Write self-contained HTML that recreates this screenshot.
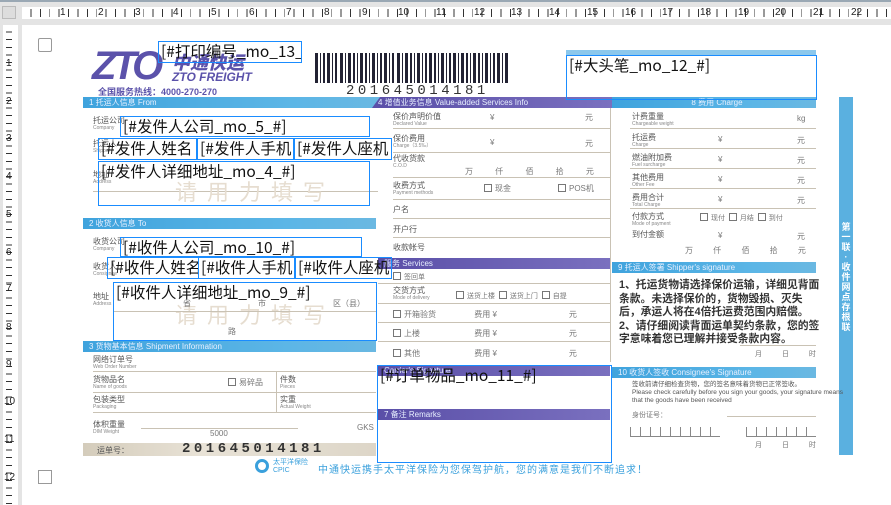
<!DOCTYPE html>
<html><head><meta charset="utf-8">
<style>
*{margin:0;padding:0;box-sizing:border-box}
body{width:891px;height:505px;overflow:hidden;background:#fff;position:relative;font-family:"Liberation Sans","Noto Sans CJK SC",sans-serif}
.a{position:absolute}
.bx{position:absolute;border:1.5px solid #1a8cff;font-family:"Noto Sans CJK SC",sans-serif;font-size:15.5px;line-height:18px;color:#111;white-space:nowrap;overflow:hidden;padding-left:2px}
.hd{position:absolute;height:11px;color:#e8f0ff;font-size:8px;line-height:11px;padding-left:6px;white-space:nowrap}
.hb{background:linear-gradient(90deg,#3fa3dd,#5cb6e6 70%,#6ab8e2)}
.hp{background:linear-gradient(90deg,#5a4fa8,#7a70bf)}
.lb{position:absolute;font-size:8px;color:#555;line-height:8px;white-space:nowrap}
.lb i{display:block;font-style:normal;font-size:5px;color:#888;line-height:6px}
.ln{position:absolute;height:1px;background:#c9c2b4}
.vl{position:absolute;width:1px;background:#c9c2b4}
.cb{display:inline-block;width:8px;height:8px;border:1px solid #777;vertical-align:-1px;margin-right:3px}
.g{color:#777;font-size:8px}
</style></head><body>
<!-- rulers -->
<div class="a" style="left:0;top:0;width:891px;height:2px;background:#9aa8b4"></div>
<div class="a" style="left:0;top:2px;width:891px;height:23px;background:#e4e4e4"></div>
<div class="a" style="left:22px;top:7px;width:869px;height:12px;background:#fff"></div>
<div class="a" style="left:2px;top:6px;width:14px;height:13px;background:#ddd;border:1px solid #bbb"></div>
<div class="a" style="left:0;top:25px;width:22px;height:480px;background:#e4e4e4"></div>
<div class="a" style="left:3px;top:25px;width:15px;height:480px;background:#fff"></div>
<div class="a" style="left:22px;top:9px;width:869px;height:8px;background:repeating-linear-gradient(90deg,transparent 0 8.5px,#333 8.5px 9.4px)"></div>
<div class="a" style="left:6px;top:25px;width:6px;height:480px;background:repeating-linear-gradient(180deg,transparent 0 6.6px,#333 6.6px 7.6px)"></div>
<div class="a" style="left:22px;top:7px;width:869px;font-size:10px;line-height:12px;color:#222;background:transparent">
<span class="a" style="left:38px">1</span><span class="a" style="left:76px">2</span><span class="a" style="left:113px">3</span><span class="a" style="left:151px">4</span><span class="a" style="left:189px">5</span><span class="a" style="left:227px">6</span><span class="a" style="left:264px">7</span><span class="a" style="left:302px">8</span><span class="a" style="left:340px">9</span><span class="a" style="left:376px">10</span><span class="a" style="left:414px">11</span><span class="a" style="left:452px">12</span><span class="a" style="left:489px">13</span><span class="a" style="left:527px">14</span><span class="a" style="left:565px">15</span><span class="a" style="left:603px">16</span><span class="a" style="left:640px">17</span><span class="a" style="left:678px">18</span><span class="a" style="left:716px">19</span><span class="a" style="left:753px">20</span><span class="a" style="left:791px">21</span><span class="a" style="left:829px">22</span></div>
<div class="a" style="left:6px;top:25px;font-size:10px;color:#222;width:12px;background:#fff">
<span class="a" style="top:33px">1</span><span class="a" style="top:71px">2</span><span class="a" style="top:108px">3</span><span class="a" style="top:146px">4</span><span class="a" style="top:184px">5</span><span class="a" style="top:222px">6</span><span class="a" style="top:258px">7</span><span class="a" style="top:297px">8</span><span class="a" style="top:334px">9</span><span class="a" style="top:371px;left:-2px">10</span><span class="a" style="top:409px;left:-2px">11</span><span class="a" style="top:447px;left:-2px">12</span></div>

<!-- corners -->
<div class="a" style="left:38px;top:38px;width:14px;height:14px;border:1.5px solid #999;border-radius:2px"></div>
<div class="a" style="left:38px;top:470px;width:14px;height:14px;border:1.5px solid #999"></div>

<!-- logo -->
<div class="a" style="left:92px;top:46px;font:italic 900 40px 'Liberation Sans',sans-serif;color:#5b52aa;letter-spacing:-4px;line-height:40px">ZTO</div>
<div class="a" style="left:172px;top:52px;font:italic 900 18px 'Noto Sans CJK SC',sans-serif;color:#5b52aa;line-height:20px">中通快运</div>
<div class="a" style="left:172px;top:70px;font:italic bold 12px 'Liberation Sans',sans-serif;color:#5b52aa">ZTO FREIGHT</div>
<div class="a" style="left:98px;top:85px;font:bold 9px 'Liberation Sans','Noto Sans CJK SC',sans-serif;color:#5b52aa">全国服务热线：4000-270-270</div>

<!-- barcode -->
<svg class="a" style="left:315px;top:53px" width="196" height="30">
<g fill="#223">
<rect x="0" width="3" height="30"/><rect x="5" width="1" height="30"/><rect x="8" width="2" height="30"/><rect x="12" width="3" height="30"/><rect x="17" width="1" height="30"/><rect x="20" width="2" height="30"/><rect x="25" width="3" height="30"/><rect x="30" width="1" height="30"/><rect x="33" width="3" height="30"/><rect x="38" width="2" height="30"/><rect x="42" width="1" height="30"/><rect x="45" width="3" height="30"/><rect x="50" width="2" height="30"/><rect x="54" width="1" height="30"/><rect x="57" width="3" height="30"/><rect x="62" width="1" height="30"/><rect x="65" width="2" height="30"/><rect x="69" width="3" height="30"/><rect x="74" width="1" height="30"/><rect x="77" width="2" height="30"/><rect x="82" width="3" height="30"/><rect x="87" width="1" height="30"/><rect x="90" width="3" height="30"/><rect x="95" width="2" height="30"/><rect x="99" width="1" height="30"/><rect x="102" width="3" height="30"/><rect x="107" width="1" height="30"/><rect x="110" width="2" height="30"/><rect x="114" width="3" height="30"/><rect x="119" width="2" height="30"/><rect x="123" width="1" height="30"/><rect x="126" width="3" height="30"/><rect x="131" width="1" height="30"/><rect x="134" width="2" height="30"/><rect x="138" width="3" height="30"/><rect x="143" width="1" height="30"/><rect x="146" width="3" height="30"/><rect x="151" width="2" height="30"/><rect x="155" width="1" height="30"/><rect x="158" width="3" height="30"/><rect x="163" width="2" height="30"/><rect x="167" width="1" height="30"/><rect x="170" width="3" height="30"/><rect x="175" width="1" height="30"/><rect x="178" width="2" height="30"/><rect x="182" width="3" height="30"/><rect x="187" width="1" height="30"/><rect x="190" width="3" height="30"/>
</g></svg>
<div class="a" style="left:346px;top:83px;font:14px 'Liberation Mono',monospace;letter-spacing:3.5px;color:#333">201645014181</div>

<!-- section headers -->
<div class="hd hb" style="left:83px;top:97px;width:300px">1 托运人信息 From</div>
<div class="hd hp" style="left:372px;top:97px;width:240px;clip-path:polygon(8px 0,100% 0,100% 100%,0 100%)">4 增值业务信息 Value-added Services Info</div>
<div class="hd hb" style="left:612px;top:97px;width:204px;text-align:center">8 费用 Charge</div>
<div class="a" style="left:566px;top:50px;width:250px;height:5px;background:#8cc8ec"></div>
<div class="hd hb" style="left:83px;top:218px;width:293px">2 收货人信息 To</div>
<div class="hd hb" style="left:83px;top:341px;width:293px">3 货物基本信息 Shipment Information</div>
<div class="hd hp" style="left:378px;top:258px;width:232px">服务 Services</div>
<div class="hd hb" style="left:612px;top:262px;width:204px">9 托运人签署 Shipper's signature</div>
<div class="hd hp" style="left:378px;top:365px;width:232px">Carrier's Signature</div>
<div class="hd hp" style="left:378px;top:409px;width:232px">7 备注 Remarks</div>
<div class="hd hb" style="left:612px;top:367px;width:204px">10 收货人签收 Consignee's Signature</div>

<!-- blue side bar -->
<div class="a" style="left:839px;top:97px;width:14px;height:358px;background:#5ab0e0;color:#fff;font-size:9px;line-height:10px;text-align:center;padding-top:125px;font-weight:bold">第<br>一<br>联<br>·<br>收<br>件<br>网<br>点<br>存<br>根<br>联</div>

<!-- left labels -->
<div class="lb" style="left:93px;top:117px">托运公司<i>Company</i></div>
<div class="lb" style="left:93px;top:140px">托运人<i>Shipper</i></div>
<div class="lb" style="left:93px;top:171px">地址<i>Address</i></div>
<div class="ln" style="left:93px;top:191px;width:285px"></div>
<div class="a" style="left:175px;top:175px;font-size:22px;color:#e6ddd0;letter-spacing:10px">请用力填写</div>
<div class="lb" style="left:93px;top:238px">收货公司<i>Company</i></div>
<div class="lb" style="left:93px;top:263px">收货人<i>Consignee</i></div>
<div class="lb" style="left:93px;top:293px">地址<i>Address</i></div>
<div class="a" style="left:175px;top:298px;font-size:22px;color:#e6ddd0;letter-spacing:10px">请用力填写</div>
<div class="a g" style="left:183px;top:298px">省</div><div class="a g" style="left:258px;top:298px">市</div><div class="a g" style="left:333px;top:298px">区（县）</div>
<div class="ln" style="left:113px;top:311px;width:263px"></div>
<div class="a g" style="left:228px;top:326px">路</div>

<!-- section 3 -->
<div class="lb" style="left:93px;top:356px">网络订单号<i>Web Order Number</i></div>
<div class="ln" style="left:93px;top:371px;width:283px"></div>
<div class="lb" style="left:93px;top:376px">货物品名<i>Name of goods</i></div>
<div class="a g" style="left:228px;top:377px"><span class="cb"></span>易碎品</div>
<div class="vl" style="left:276px;top:371px;height:42px"></div>
<div class="lb" style="left:280px;top:376px">件数<i>Pieces</i></div>
<div class="ln" style="left:93px;top:392px;width:283px"></div>
<div class="lb" style="left:93px;top:396px">包装类型<i>Packaging</i></div>
<div class="lb" style="left:280px;top:396px">实重<i>Actual Weight</i></div>
<div class="ln" style="left:93px;top:412px;width:283px"></div>
<div class="lb" style="left:93px;top:421px">体积重量<i>DIM Weight</i></div>
<div class="ln" style="left:141px;top:428px;width:157px"></div>
<div class="a g" style="left:210px;top:429px">5000</div>
<div class="a g" style="left:357px;top:423px">GKS</div>
<div class="a" style="left:83px;top:443px;width:293px;height:13px;background:linear-gradient(90deg,#d4ccbb,#e8e2d6 40%,#ddd6c8)"></div>
<div class="a" style="left:97px;top:445px;font-size:8px;color:#555">运单号：</div>
<div class="a" style="left:182px;top:441px;font:bold 14px 'Liberation Mono',monospace;letter-spacing:3.5px;color:#333">201645014181</div>

<!-- footer -->
<div class="a" style="left:255px;top:459px;width:14px;height:14px;border-radius:50%;border:3px solid #3aa0dc"></div>
<div class="a" style="left:273px;top:459px;font-size:7px;color:#3aa0dc;line-height:8px">太平洋保险<br>CPIC</div>
<div class="a" style="left:318px;top:461px;font-size:10px;color:#3aa0dc;letter-spacing:1px">中通快运携手太平洋保险为您保驾护航，您的满意是我们不断追求！</div>

<!-- section 4 rows -->
<div class="vl" style="left:610px;top:108px;height:254px"></div>
<div class="lb" style="left:393px;top:113px">保价声明价值<i>Declared Value</i></div>
<div class="a g" style="left:490px;top:113px">¥</div><div class="a g" style="left:585px;top:112px">元</div>
<div class="ln" style="left:393px;top:128px;width:217px"></div>
<div class="lb" style="left:393px;top:135px">保价费用<i>Charge（3.5‰）</i></div>
<div class="a g" style="left:490px;top:138px">¥</div><div class="a g" style="left:585px;top:138px">元</div>
<div class="ln" style="left:393px;top:152px;width:217px"></div>
<div class="lb" style="left:393px;top:155px">代收货款<i>C.O.D</i></div>
<div class="a g" style="left:465px;top:166px;word-spacing:20px">万 仟 佰 拾 元</div>
<div class="ln" style="left:393px;top:177px;width:217px"></div>
<div class="lb" style="left:393px;top:182px">收费方式<i>Payment methods</i></div>
<div class="a g" style="left:484px;top:183px"><span class="cb"></span>现金</div>
<div class="a g" style="left:558px;top:183px"><span class="cb"></span>POS机</div>
<div class="ln" style="left:393px;top:199px;width:217px"></div>
<div class="lb" style="left:393px;top:206px">户名</div>
<div class="ln" style="left:393px;top:218px;width:217px"></div>
<div class="lb" style="left:393px;top:226px">开户行</div>
<div class="ln" style="left:393px;top:237px;width:217px"></div>
<div class="lb" style="left:393px;top:244px">收款帐号</div>
<div class="a g" style="left:393px;top:272px;font-size:7px"><span class="cb"></span>签回单</div>
<div class="ln" style="left:378px;top:283px;width:232px"></div>
<div class="lb" style="left:393px;top:287px">交货方式<i>Mode of delivery</i></div>
<div class="a g" style="left:456px;top:291px;font-size:7px"><span class="cb"></span>送货上楼 &nbsp;<span class="cb"></span>送货上门 &nbsp;<span class="cb"></span>自提</div>
<div class="ln" style="left:378px;top:303px;width:232px"></div>
<div class="a g" style="left:393px;top:309px"><span class="cb"></span>开箱验货 <span style="margin-left:36px">费用 ¥</span><span style="margin-left:72px">元</span></div>
<div class="ln" style="left:378px;top:322px;width:232px"></div>
<div class="a g" style="left:393px;top:328px"><span class="cb"></span>上楼 <span style="margin-left:52px">费用 ¥</span><span style="margin-left:72px">元</span></div>
<div class="ln" style="left:378px;top:341px;width:232px"></div>
<div class="a g" style="left:393px;top:348px"><span class="cb"></span>其他 <span style="margin-left:52px">费用 ¥</span><span style="margin-left:72px">元</span></div>

<!-- section 8 rows -->
<div class="lb" style="left:632px;top:113px">计费重量<i>Chargeable weight</i></div><div class="a g" style="left:797px;top:114px">kg</div>
<div class="ln" style="left:630px;top:128px;width:186px"></div>
<div class="lb" style="left:632px;top:134px">托运费<i>Charge</i></div><div class="a g" style="left:718px;top:135px">¥</div><div class="a g" style="left:797px;top:135px">元</div>
<div class="ln" style="left:630px;top:148px;width:186px"></div>
<div class="lb" style="left:632px;top:154px">燃油附加费<i>Fuel surcharge</i></div><div class="a g" style="left:718px;top:155px">¥</div><div class="a g" style="left:797px;top:155px">元</div>
<div class="ln" style="left:630px;top:168px;width:186px"></div>
<div class="lb" style="left:632px;top:174px">其他费用<i>Other Fee</i></div><div class="a g" style="left:718px;top:175px">¥</div><div class="a g" style="left:797px;top:175px">元</div>
<div class="ln" style="left:630px;top:188px;width:186px"></div>
<div class="lb" style="left:632px;top:194px">费用合计<i>Total Charge</i></div><div class="a g" style="left:718px;top:195px">¥</div><div class="a g" style="left:797px;top:195px">元</div>
<div class="ln" style="left:630px;top:208px;width:186px"></div>
<div class="lb" style="left:632px;top:213px">付款方式<i>Mode of payment</i></div>
<div class="a g" style="left:700px;top:213px;font-size:7px"><span class="cb"></span>现付 &nbsp;<span class="cb"></span>月结 &nbsp;<span class="cb"></span>到付</div>
<div class="lb" style="left:632px;top:231px">到付金额</div><div class="a g" style="left:718px;top:231px">¥</div><div class="a g" style="left:797px;top:231px">元</div>
<div class="a g" style="left:685px;top:245px;word-spacing:18px">万 仟 佰 拾 元</div>

<!-- section 9 -->
<div class="a" style="left:619px;top:279px;width:205px;font-size:10.8px;line-height:13.5px;font-weight:bold;color:#333">1、托运货物请选择保价运输，详细见背面条款。未选择保价的，货物毁损、灭失后，承运人将在4倍托运费范围内赔偿。2、请仔细阅读背面运单契约条款，您的签字意味着您已理解并接受条款内容。</div>
<div class="ln" style="left:740px;top:345px;width:76px"></div>
<div class="a g" style="left:755px;top:349px;font-size:7px;word-spacing:18px">月 日 时</div>
<!-- section 10 -->
<div class="a" style="left:632px;top:381px;font-size:6.5px;color:#555;line-height:8px">签收前请仔细检查货物，您的签名意味着货物已正常签收。<br>Please check carefully before you sign your goods, your signature means<br>that the goods have been received</div>
<div class="a g" style="left:632px;top:410px;font-size:7px">身份证号：</div>
<div class="ln" style="left:727px;top:416px;width:89px"></div>
<div class="a" style="left:630px;top:427px;width:90px;height:10px;border-bottom:1px solid #888;background:repeating-linear-gradient(90deg,#888 0 1px,transparent 1px 10px)"></div>
<div class="a" style="left:746px;top:427px;width:70px;height:10px;border-bottom:1px solid #888;background:repeating-linear-gradient(90deg,#888 0 1px,transparent 1px 10px)"></div>
<div class="a g" style="left:755px;top:440px;font-size:7px;word-spacing:18px">月 日 时</div>

<!-- template boxes -->
<div class="bx" style="left:158px;top:41px;width:144px;height:22px">[#打印编号_mo_13_#</div>
<div class="bx" style="left:566px;top:55px;width:251px;height:45px">[#大头笔_mo_12_#]</div>
<div class="bx" style="left:120px;top:116px;width:250px;height:21px">[#发件人公司_mo_5_#]</div>
<div class="bx" style="left:98px;top:138px;width:99px;height:22px">[#发件人姓名</div>
<div class="bx" style="left:197px;top:138px;width:97px;height:22px">[#发件人手机</div>
<div class="bx" style="left:294px;top:138px;width:98px;height:22px">[#发件人座机</div>
<div class="bx" style="left:98px;top:161px;width:272px;height:45px">[#发件人详细地址_mo_4_#]</div>
<div class="bx" style="left:120px;top:237px;width:242px;height:20px">[#收件人公司_mo_10_#]</div>
<div class="bx" style="left:107px;top:257px;width:92px;height:22px">[#收件人姓名</div>
<div class="bx" style="left:198px;top:257px;width:97px;height:22px">[#收件人手机</div>
<div class="bx" style="left:295px;top:257px;width:97px;height:22px">[#收件人座机</div>
<div class="bx" style="left:113px;top:282px;width:264px;height:59px">[#收件人详细地址_mo_9_#]</div>
<div class="bx" style="left:377px;top:365px;width:235px;height:98px">[#订单物品_mo_11_#]</div>
</body></html>
